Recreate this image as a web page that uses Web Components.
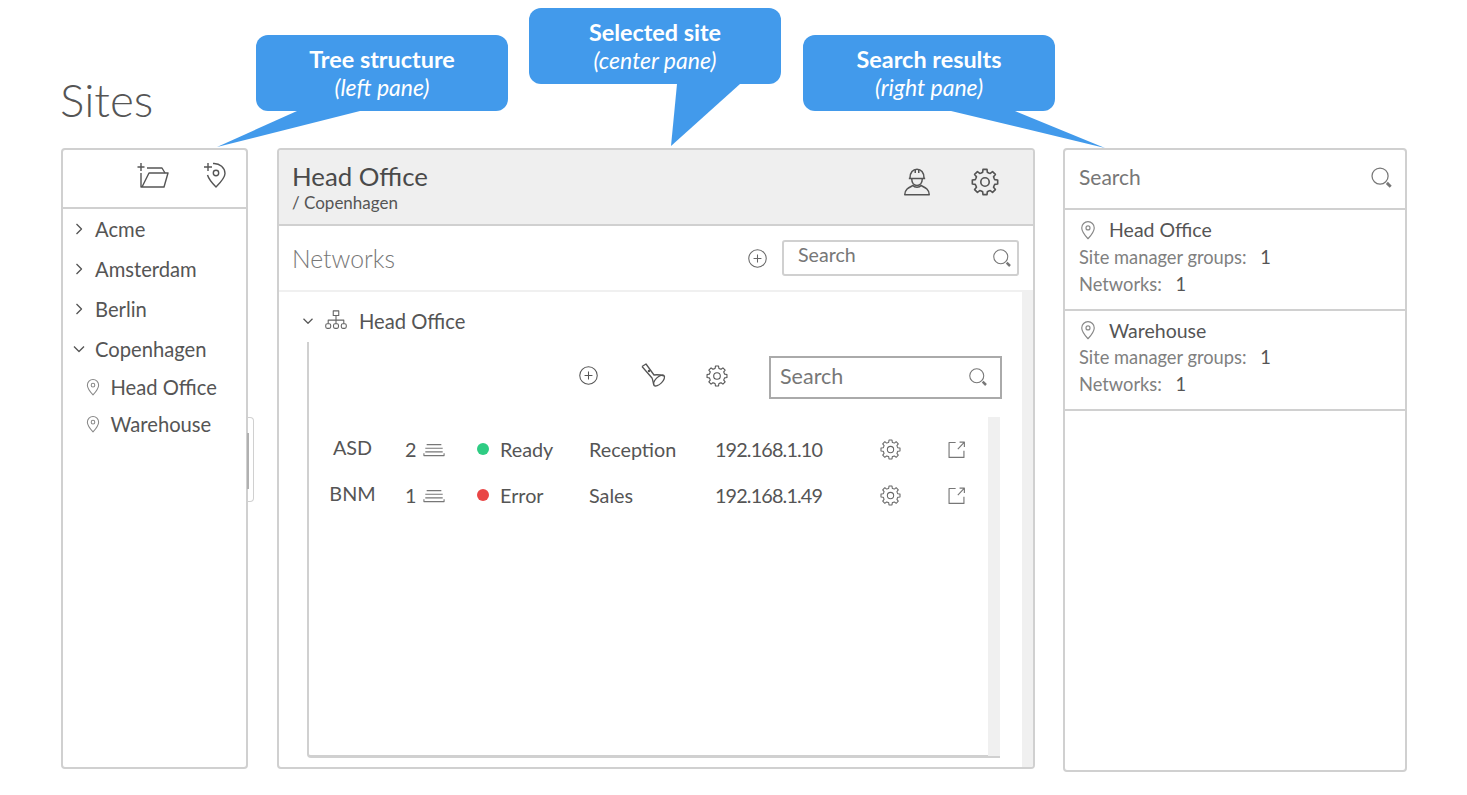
<!DOCTYPE html>
<html lang="en">
<head>
<meta charset="utf-8">
<title>Sites</title>
<style>
  html, body { margin: 0; background: #fff; }
  body { font-family: Lato, "Liberation Sans", sans-serif; color: #555; }
</style>
</head>
<body>
<sites-page>
  <sites-tree slot="left"></sites-tree>
  <site-detail slot="center"></site-detail>
  <search-pane slot="right"></search-pane>
  <pane-callout slot="callouts" title-text="Tree structure" note="left pane" box-x="256" box-y="35" tail="41,76 104,76 -39,112"></pane-callout>
  <pane-callout slot="callouts" title-text="Selected site" note="center pane" box-x="529" box-y="8" tail="148,76 211,76 142,138"></pane-callout>
  <pane-callout slot="callouts" title-text="Search results" note="right pane" box-x="803" box-y="35" tail="148,76 212,76 302,113"></pane-callout>
</sites-page>

<script>
// gear outline with 8 teeth, centred on 12,12
function gearPath() {
  let d = "";
  const teeth = 8;
  for (let i = 0; i < teeth; i++) {
    const a = (i / teeth) * Math.PI * 2;
    const step = (Math.PI * 2) / teeth;
    const pts = [
      [8.4, a - step * 0.5],
      [8.6, a - step * 0.3],
      [11, a - step * 0.2],
      [11, a + step * 0.2],
      [8.6, a + step * 0.3],
    ];
    pts.forEach((p, n) => {
      const x = (12 + p[0] * Math.cos(p[1])).toFixed(2);
      const y = (12 + p[0] * Math.sin(p[1])).toFixed(2);
      d += (i === 0 && n === 0 ? "M" : "L") + x + " " + y + " ";
    });
  }
  return d + "Z";
}

const ICONS = {
  search: '<circle cx="10.5" cy="10.5" r="8.4"/><path d="M17.6 17.6l4 4" stroke-width="3"/>',
  gear: `<path d="${gearPath()}"/><circle cx="12" cy="12" r="3.6"/>`,
  plus: '<circle cx="12" cy="12" r="10"/><path d="M12 7.5v9M7.5 12h9"/>',
  pin: '<path d="M12 22.5C7.5 17.5 4.5 13.8 4.5 9.5a7.5 7.5 0 0 1 15 0c0 4.3-3 8-7.5 13z"/><circle cx="12" cy="9.5" r="2.4"/>',
  pinAdd: '<path d="M5 1v8M1 5h8"/><path d="M10 1.5C17 1 22 6 22 11.5 22 16 17 21 13 25 9.5 21.5 6 18 4.5 13"/><circle cx="13" cy="11" r="2.7"/>',
  folderAdd: '<path d="M4 1v8M.5 5h7"/><path d="M4 11v14h23l4-14H12L5 25"/><path d="M10 6h15l3 5"/>',
  worker: '<path d="M5 9h14"/><path d="M6 8.5C6 4 8.5 1 12 1s6 3 6 7.5"/><path d="M10.5 1.3v3M13.5 1.3v3"/><path d="M7.5 9.5c0 3.5 2 5.5 4.5 5.5s4.5-2 4.5-5.5"/><path d="M1.5 23c0-4.5 3-6 7-8 1.5 2 5.5 2 7 0 4 2 7 3.5 7 8z"/>',
  torch: '<path d="M1 3.5L5 1l8 11c3-.5 7 0 10 1"/><path d="M1 3.5L11 15c1 2 1 5 2 7"/><ellipse cx="18" cy="17.5" rx="7" ry="3.4" transform="rotate(-45 18 17.5)"/><circle cx="8" cy="8" r=".6"/>',
  network: '<rect x="9" y="1" width="6" height="5"/><path d="M12 6v5M3.5 15v-4h17v4M12 11v4"/><rect x=".8" y="15" width="5.4" height="5" rx="1.6"/><rect x="9.3" y="15" width="5.4" height="5" rx="1.6"/><rect x="17.8" y="15" width="5.4" height="5" rx="1.6"/>',
  stack: '<path d="M4 5h16M2.5 9h19M2.5 13h19M1 14.5V17h22v-2.5"/>',
  open: '<path d="M11 4H3.5v17h17v-7.5"/><path d="M13.5 11.5L21 3.5M15.5 3.5H21v5.5"/>',
  chevronRight: '<path d="M9 6l6 6-6 6"/>',
  chevronDown: '<path d="M6 9l6 6 6-6"/>',
};
// icons not drawn on the 24 grid
const BOXES = { folderAdd: [32, 26], pinAdd: [26, 26], torch: [26, 26] };

class UiIcon extends HTMLElement {
  connectedCallback() {
    const name = this.getAttribute("name");
    const size = Number(this.getAttribute("size") || 20);
    const box = BOXES[name] || [24, 24];
    const width = (size * box[0]) / box[1];
    const weight = this.getAttribute("weight") || 1.3;
    const color = this.getAttribute("color") || "#666";
    this.attachShadow({ mode: "open" }).innerHTML = `
      <style>
        :host { display: inline-flex; flex: none; line-height: 0; }
        svg { fill: none; stroke: ${color}; stroke-width: ${weight}; stroke-linejoin: round; overflow: visible; }
      </style>
      <svg width="${width}" height="${size}" viewBox="0 0 ${box[0]} ${box[1]}">${ICONS[name]}</svg>`;
  }
}
customElements.define("ui-icon", UiIcon);

class SitesPage extends HTMLElement {
  constructor() {
    super();
    this.attachShadow({ mode: "open" }).innerHTML = `
      <style>
        :host { display: block; position: relative; width: 1467px; height: 795px; overflow: hidden; box-sizing: border-box; padding-left: 61px; }
        h1 { margin: 0 0 0 -1px; height: 148px; box-sizing: border-box; padding-top: 72px; font-size: 45.8px; line-height: 56px; font-weight: 300; color: #555; }
        .panes { display: flex; align-items: flex-start; }
        ::slotted([slot="left"]) { margin-right: 29px; }
        ::slotted([slot="center"]) { margin-right: 28px; }
      </style>
      <h1>Sites</h1>
      <div class="panes">
        <slot name="left"></slot>
        <slot name="center"></slot>
        <slot name="right"></slot>
      </div>
      <slot name="callouts"></slot>`;
  }
}
customElements.define("sites-page", SitesPage);

class PaneCallout extends HTMLElement {
  connectedCallback() {
    const x = this.getAttribute("box-x");
    const y = this.getAttribute("box-y");
    this.attachShadow({ mode: "open" }).innerHTML = `
      <style>
        :host { display: block; position: absolute; left: ${x}px; top: ${y}px; width: 252px; height: 76px; }
        .box { position: relative; height: 100%; box-sizing: border-box; padding-top: 11px; background: #429aeb; border-radius: 12px; color: #fff; text-align: center; font-size: 23.4px; line-height: 27.5px; }
        b { display: block; position: relative; font-weight: 700; }
        i { display: block; position: relative; font-weight: 400; font-size: 23px; }
        svg { position: absolute; left: 0; top: 0; overflow: visible; }
        polygon { fill: #429aeb; }
      </style>
      <div class="box">
        <svg width="252" height="76"><polygon points="${this.getAttribute("tail")}"/></svg>
        <b>${this.getAttribute("title-text")}</b>
        <i>(${this.getAttribute("note")})</i>
      </div>`;
  }
}
customElements.define("pane-callout", PaneCallout);

class TreeRow extends HTMLElement {
  connectedCallback() {
    const kind = this.getAttribute("kind");
    const icon = kind === "leaf"
      ? '<ui-icon name="pin" size="18" weight="1.4" color="#888"></ui-icon>'
      : `<ui-icon name="${kind === "open" ? "chevronDown" : "chevronRight"}" size="20" weight="1.6" color="#555"></ui-icon>`;
    this.attachShadow({ mode: "open" }).innerHTML = `
      <style>
        :host { display: flex; align-items: center; height: 40px; padding-left: 6px; font-size: 20.2px; color: #555; }
        :host([kind="open"]) { margin-bottom: -1px; }
        :host([kind="leaf"]) { height: 37.5px; padding-left: 21px; }
        .label { margin-left: 6px; }
        :host([kind="leaf"]) .label { margin-left: 8.5px; }
      </style>
      ${icon}<span class="label"><slot></slot></span>`;
  }
}
customElements.define("tree-row", TreeRow);

class SitesTree extends HTMLElement {
  constructor() {
    super();
    this.attachShadow({ mode: "open" }).innerHTML = `
      <style>
        :host { display: block; position: relative; width: 187px; height: 621px; box-sizing: border-box; border: 2px solid #d0d0d0; border-radius: 4px; }
        .tools { display: flex; justify-content: flex-end; align-items: center; gap: 34px; height: 59px; padding: 0 17px 7px 0; box-sizing: border-box; border-bottom: 2px solid #d0d0d0; }
        .list { margin-top: -1px; padding-top: 1px; }
        .grip { position: absolute; left: 184px; top: 267px; width: 7px; height: 85px; box-sizing: border-box; border: 1px solid #d0d0d0; border-left: none; border-radius: 0 4px 4px 0; }
        .grip::before { content: ""; position: absolute; left: 0; top: 15px; height: 56px; width: 2px; background: #b0b0b0; }
      </style>
      <div class="tools">
        <ui-icon name="folderAdd" size="26" weight="1.4" color="#555"></ui-icon>
        <ui-icon name="pinAdd" size="26" weight="1.4" color="#555"></ui-icon>
      </div>
      <div class="list">
        <tree-row>Acme</tree-row>
        <tree-row>Amsterdam</tree-row>
        <tree-row>Berlin</tree-row>
        <tree-row kind="open">Copenhagen</tree-row>
        <tree-row kind="leaf">Head Office</tree-row>
        <tree-row kind="leaf">Warehouse</tree-row>
      </div>
      <div class="grip"></div>`;
  }
}
customElements.define("sites-tree", SitesTree);

class SearchBox extends HTMLElement {
  connectedCallback() {
    this.attachShadow({ mode: "open" }).innerHTML = `
      <style>
        :host { display: flex; align-items: center; justify-content: space-between; box-sizing: border-box; color: #777; font-size: 20px; }
        span { margin-bottom: var(--lift, 0); }
      </style>
      <span>Search</span><ui-icon name="search" size="${this.getAttribute("icon") || 20}" weight="1.3" color="#777"></ui-icon>`;
  }
}
customElements.define("search-box", SearchBox);

class DeviceRow extends HTMLElement {
  connectedCallback() {
    const a = (n) => this.getAttribute(n);
    this.attachShadow({ mode: "open" }).innerHTML = `
      <style>
        :host { display: grid; grid-template-columns: 96px 72px 112px 126px 165px 66px auto; align-items: center; height: 46px; font-size: 19.8px; color: #555; }
        .code { width: 87px; text-align: center; margin-bottom: 4px; }
        .count, .state { display: flex; align-items: center; }
        .count ui-icon { margin: 4px 0 0 7px; }
        .dot { width: 12px; height: 12px; border-radius: 50%; margin-right: 11px; background: ${a("dot")}; }
        .ip { letter-spacing: -0.85px; }
      </style>
      <span class="code">${a("code")}</span>
      <span class="count">${a("count")}<ui-icon name="stack" size="22" weight="1.2" color="#777"></ui-icon></span>
      <span class="state"><span class="dot"></span>${a("state")}</span>
      <span>${a("place")}</span>
      <span class="ip">${a("ip")}</span>
      <ui-icon name="gear" size="21" weight="1.2" color="#666"></ui-icon>
      <ui-icon name="open" size="21" weight="1.3" color="#777"></ui-icon>`;
  }
}
customElements.define("device-row", DeviceRow);

class SiteDetail extends HTMLElement {
  constructor() {
    super();
    this.attachShadow({ mode: "open" }).innerHTML = `
      <style>
        :host { display: block; width: 758px; height: 621px; box-sizing: border-box; border: 2px solid #d0d0d0; border-radius: 4px; color: #555; overflow: hidden; }
        header { display: flex; align-items: center; height: 76px; box-sizing: border-box; padding: 0 34px 0 13px; background: #efefef; border-bottom: 2px solid #d0d0d0; }
        .names { flex: 1; }
        h2 { margin: -1px 0 0; font-size: 25.8px; line-height: 30px; font-weight: 400; color: #4a4a4a; }
        .path { margin-top: 2px; font-size: 17px; line-height: 20px; }
        header ui-icon { margin-bottom: 10px; }
        header ui-icon + ui-icon { margin-left: 40px; }
        .nets { display: flex; align-items: center; height: 66px; box-sizing: border-box; padding: 0 14px 0 13px; border-bottom: 2px solid #f0f0f0; }
        .nets h3 { flex: 1; margin: 0; font-size: 24.7px; font-weight: 300; color: #777; }
        .nets search-box { --lift: 6.5px; width: 237px; height: 36px; margin-left: 14px; padding: 0 5px 0 14px; border: 2px solid #d0d0d0; border-radius: 3px; font-size: 19.6px; }
        .body { display: flex; height: 475px; }
        .scroll { flex: 1; padding: 7px 0 0 23px; }
        .gutter { width: 11px; background: #f0f0f0; }
        .net { display: flex; align-items: center; gap: 8px; height: 43px; margin-left: -3px; font-size: 20.2px; }
        .net .name { margin-left: 4px; }
        .panel { margin: 0 0 0 5px; width: 693px; height: 416px; box-sizing: border-box; border-left: 2px solid #d0d0d0; border-bottom: 3px solid #d0d0d0; border-radius: 0 0 0 4px; }
        .tools { display: flex; align-items: center; justify-content: flex-end; height: 75px; margin-right: -2px; box-sizing: border-box; }
        .tools ui-icon { margin: 0 42px 8px 0; }
        .tools ui-icon:nth-child(2) { margin-right: 39px; }
        .tools ui-icon:nth-child(3) { margin-right: 41px; }
        .tools search-box { --lift: 2px; width: 233px; height: 43px; margin: 0 0 4px; padding: 0 12px 2px 9px; border: 2px solid #aaa; font-size: 21.5px; }
        .rows { display: flex; height: 339px; }
        .list { flex: 1; padding-top: 9px; }
        .rail { width: 12px; background: #f0f0f0; }
      </style>
      <header>
        <div class="names"><h2>Head Office</h2><div class="path">/ Copenhagen</div></div>
        <ui-icon name="worker" size="28" weight="1.3" color="#555"></ui-icon>
        <ui-icon name="gear" size="28" weight="1.4" color="#555"></ui-icon>
      </header>
      <div class="nets">
        <h3>Networks</h3>
        <ui-icon name="plus" size="21" weight="1.2" color="#666"></ui-icon>
        <search-box></search-box>
      </div>
      <div class="body">
        <div class="scroll">
          <div class="net">
            <ui-icon name="chevronDown" size="18" weight="1.6" color="#555"></ui-icon>
            <ui-icon name="network" size="22" weight="1.2" color="#666"></ui-icon>
            <span class="name">Head Office</span>
          </div>
          <div class="panel">
            <div class="tools">
              <ui-icon name="plus" size="21" weight="1.2" color="#555"></ui-icon>
              <ui-icon name="torch" size="26" weight="1.3" color="#555"></ui-icon>
              <ui-icon name="gear" size="22" weight="1.2" color="#555"></ui-icon>
              <search-box></search-box>
            </div>
            <div class="rows">
              <div class="list">
                <device-row code="ASD" count="2" dot="#2ecc83" state="Ready" place="Reception" ip="192.168.1.10"></device-row>
                <device-row code="BNM" count="1" dot="#e94646" state="Error" place="Sales" ip="192.168.1.49"></device-row>
              </div>
              <div class="rail"></div>
            </div>
          </div>
        </div>
        <div class="gutter"></div>
      </div>`;
  }
}
customElements.define("site-detail", SiteDetail);

class ResultItem extends HTMLElement {
  connectedCallback() {
    const a = (n) => this.getAttribute(n);
    this.attachShadow({ mode: "open" }).innerHTML = `
      <style>
        :host { display: block; height: 100.5px; box-sizing: border-box; padding: 5.5px 0 0 14px; border-bottom: 2px solid #d0d0d0; font-size: 18.3px; color: #808080; }
        .title { display: flex; align-items: center; gap: 11.5px; height: 28px; margin: 0 0 .25px -1.5px; font-size: 19.5px; color: #555; }
        .line { height: 27px; line-height: 27px; }
        b { font-weight: 400; color: #555; margin-left: 9px; }
      </style>
      <div class="title"><ui-icon name="pin" size="20" weight="1.4" color="#888"></ui-icon><slot></slot></div>
      <div class="line">Site manager groups: <b>${a("groups")}</b></div>
      <div class="line">Networks: <b>${a("networks")}</b></div>`;
  }
}
customElements.define("result-item", ResultItem);

class SearchPane extends HTMLElement {
  constructor() {
    super();
    this.attachShadow({ mode: "open" }).innerHTML = `
      <style>
        :host { display: block; width: 344px; height: 624px; box-sizing: border-box; border: 2px solid #d0d0d0; border-radius: 4px; }
        search-box { --lift: 2px; height: 60px; padding: 0 12px 4px 14px; border-bottom: 2px solid #d0d0d0; font-size: 21px; }
      </style>
      <search-box icon="23"></search-box>
      <result-item groups="1" networks="1">Head Office</result-item>
      <result-item groups="1" networks="1">Warehouse</result-item>`;
  }
}
customElements.define("search-pane", SearchPane);
</script>
</body>
</html>
